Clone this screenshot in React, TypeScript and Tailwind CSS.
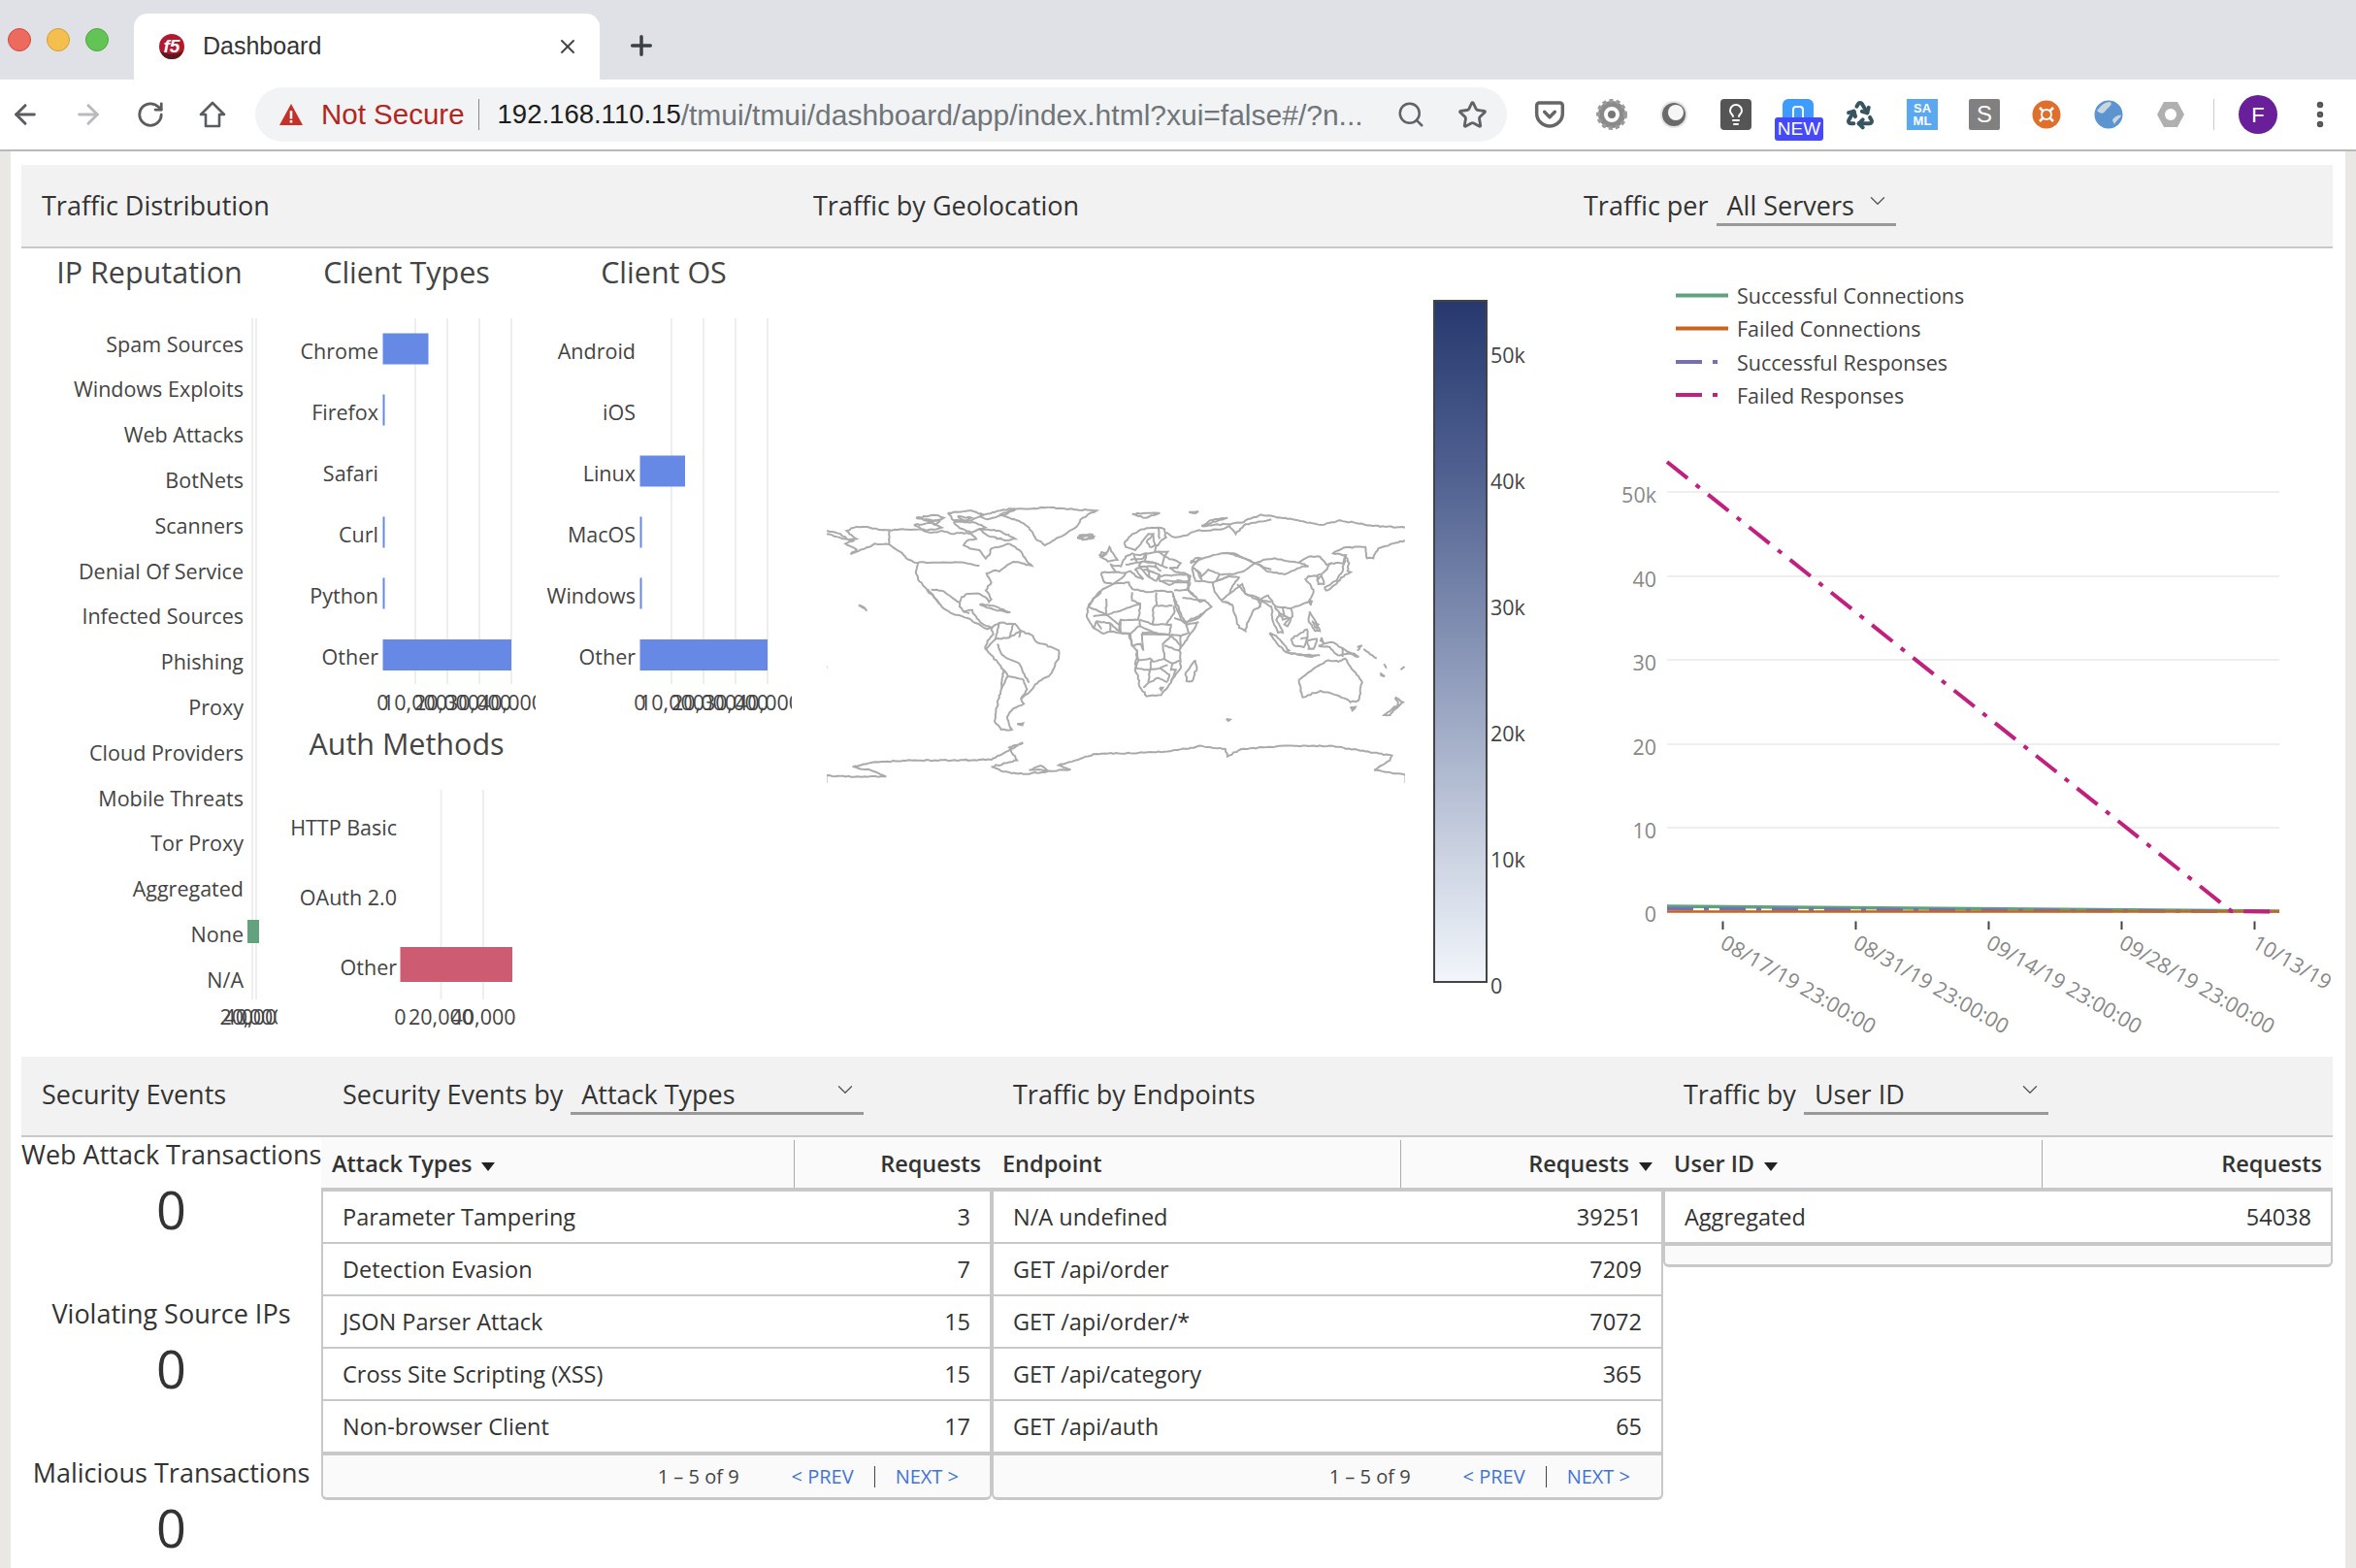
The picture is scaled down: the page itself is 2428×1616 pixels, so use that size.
import { ArrowLeft, ArrowRight, RotateCw, Search, Star, MoreVertical, X, Plus, ChevronDown, Lightbulb, Recycle, Pocket } from 'lucide-react';

type Pt = number[];

// rough coastline: subdivide the traced outline and shake it a little
function rough(pts: Pt, amp = 2) {
  let seed = pts.length * 7 + Math.round(pts[0]);
  const rnd = () => {
    seed = (seed * 9301 + 49297) % 233280;
    return seed / 233280 - 0.5;
  };
  let d = `M${pts[0]} ${pts[1]}`;
  for (let i = 2; i < pts.length; i += 2) {
    const x0 = pts[i - 2];
    const y0 = pts[i - 1];
    const x1 = pts[i];
    const y1 = pts[i + 1];
    const n = Math.max(1, Math.round(Math.hypot(x1 - x0, y1 - y0) / 7));
    for (let k = 1; k <= n; k++) {
      const end = k === n;
      const x = x0 + ((x1 - x0) * k) / n + (end ? 0 : rnd() * amp * 2);
      const y = y0 + ((y1 - y0) * k) / n + (end ? 0 : rnd() * amp * 2);
      d += `L${x.toFixed(1)} ${y.toFixed(1)}`;
    }
  }
  return d;
}

// points traced at 3x from a crop at page position (x0, y0), converted to map units
const crop = (x0: number, y0: number, pts: Pt) =>
  pts.map((v, i) => (i % 2 === 0 ? (x0 + v / 3 - 830) * 2.45 : (y0 + v / 3 - 500) * 3));
const A = (pts: Pt) => crop(1110, 530, pts);
const B = (pts: Pt) => crop(1110, 610, pts);
const C = (pts: Pt) => crop(1260, 560, pts);

const coast: Pt[] = [
  // north america
  [55, 140, 90, 150, 110, 168, 130, 165, 112, 150, 105, 140, 125, 130, 150, 128, 185, 136, 212, 138, 260, 136, 290, 135, 320, 146, 345, 140, 370, 150, 395, 146, 420, 150, 432, 165, 410, 170, 400, 185, 415, 195, 440, 200, 456, 226, 466, 214, 470, 195, 490, 190, 512, 180, 530, 190, 546, 206, 560, 235, 572, 248, 545, 240, 525, 236, 510, 246, 490, 266, 476, 263, 458, 272, 470, 300, 456, 325, 470, 352, 464, 360, 455, 345, 440, 335, 410, 335, 395, 345, 390, 375, 400, 390, 422, 385, 428, 400, 438, 415, 450, 430, 470, 440, 460, 444, 430, 425, 410, 410, 375, 398, 345, 375, 318, 335, 300, 312, 285, 290, 280, 265, 285, 240, 275, 238, 255, 225, 240, 205, 212, 182, 175, 180, 150, 196, 115, 212, 130, 198, 102, 180, 125, 170, 95, 165, 55, 150],
  [310, 320, 325, 345, 340, 368],
  // greenland
  [490, 90, 540, 72, 620, 68, 735, 78, 700, 100, 680, 132, 640, 160, 605, 185, 582, 165, 565, 130, 540, 110, 490, 90],
  // arctic islands
  [280, 100, 330, 92, 350, 100, 320, 112, 280, 100],
  [360, 85, 420, 78, 450, 90, 420, 108, 375, 108, 360, 85],
  [375, 112, 430, 115, 455, 130, 420, 145, 390, 132, 375, 112],
  [275, 122, 320, 116, 345, 130, 305, 140, 275, 122],
  [440, 135, 490, 140, 530, 165, 505, 170, 460, 155, 440, 135],
  [440, 95, 500, 75, 530, 72, 500, 92, 460, 105, 440, 95],
  [300, 105, 340, 110, 330, 120, 300, 105],
  [385, 95, 420, 100, 400, 112, 385, 95],
  [690, 155, 725, 152, 728, 162, 700, 168, 690, 155],
  [825, 88, 865, 85, 895, 85, 860, 100, 825, 88],
  [968, 82, 992, 80, 985, 86, 968, 82],
  // cuba, hawaii and small ones
  [440, 368, 475, 372, 518, 392, 480, 385, 440, 368],
  [135, 370, 150, 378, 156, 388, 146, 378, 135, 370],
  [535, 737, 550, 735, 548, 741, 535, 737],
  [1062, 722, 1072, 724, 1068, 728, 1062, 722],
  // south america
  [470, 440, 490, 425, 530, 428, 545, 450, 575, 465, 582, 482, 640, 510, 640, 530, 625, 570, 615, 590, 590, 605, 565, 640, 545, 660, 552, 675, 525, 690, 510, 715, 515, 740, 522, 755, 495, 755, 478, 730, 482, 690, 495, 630, 500, 570, 475, 530, 455, 505, 460, 480, 475, 460, 470, 440],
  // africa
  A([35, 285, 50, 260, 75, 235, 110, 215, 160, 210, 170, 230, 220, 240, 245, 235, 295, 240]),
  B([75, 0, 50, 20, 35, 45, 30, 75, 50, 110, 80, 128, 105, 122, 160, 128, 170, 165, 185, 180, 180, 235, 195, 295, 215, 322, 260, 318, 290, 280, 320, 235, 318, 175, 345, 135, 375, 92, 340, 100, 325, 90, 305, 45, 296, 0]),
  B([365, 210, 370, 235, 355, 275, 338, 275, 335, 250, 350, 230, 365, 210]),
  // europe
  A([145, 90, 160, 70, 190, 50, 215, 42, 250, 40, 270, 45, 275, 70, 260, 80, 250, 95, 225, 100, 215, 85, 235, 60, 220, 60, 200, 85, 180, 110, 165, 105, 150, 100, 145, 90]),
  A([275, 55, 300, 70, 330, 65, 370, 50, 450, 45, 470, 35, 490, 60, 520, 30, 600, 15]),
  A([385, 35, 410, 18, 465, 10, 420, 22, 400, 35, 385, 35]),
  A([70, 130, 95, 115, 100, 100, 115, 125, 125, 140, 95, 145, 70, 130]),
  A([75, 115, 90, 122, 80, 130, 70, 125, 75, 115]),
  A([75, 180, 120, 178, 150, 180, 140, 195, 110, 215, 85, 210, 75, 180]),
  A([120, 178, 105, 155, 135, 160, 150, 130, 170, 120, 190, 125, 215, 120, 245, 115, 260, 115, 280, 115, 270, 130, 320, 150, 310, 165, 285, 165, 300, 175, 330, 180, 350, 190, 345, 210, 300, 210, 285, 218, 255, 205, 255, 185, 245, 205, 225, 195, 195, 165, 180, 170, 205, 200, 180, 190, 165, 175, 150, 180]),
  A([255, 190, 340, 185, 345, 205, 255, 205]),
  A([0, 70, 30, 65, 50, 68, 30, 76, 0, 72]),
  // middle east
  A([295, 245, 315, 295, 335, 335, 395, 300, 415, 285, 395, 265, 380, 270, 360, 250, 340, 230, 350, 210]),
  A([355, 165, 380, 180, 385, 205, 365, 205, 355, 165]),
  A([350, 150, 365, 135, 380, 135, 355, 165]),
  // asia
  [1000, 125, 1060, 120, 1100, 115, 1150, 90, 1230, 105, 1300, 122, 1350, 108, 1430, 125, 1513, 130],
  [1513, 170, 1482, 180],
  C([525, 0, 480, 15, 465, 45, 445, 45, 440, 10, 375, 12, 340, 30, 380, 35, 375, 60, 335, 60, 310, 90, 290, 100, 265, 100, 255, 110, 270, 125, 280, 150, 265, 180, 240, 190, 210, 200, 215, 225, 200, 255, 190, 250, 205, 230, 185, 235, 175, 215, 165, 235, 185, 275, 170, 275, 155, 240, 150, 195, 120, 175, 115, 195, 95, 205, 75, 245, 70, 270, 50, 260, 30, 190, 5, 180]),
  A([445, 265, 480, 280]),
  C([290, 110, 305, 100, 312, 125, 295, 125, 290, 110]),
  C([375, 35, 390, 60, 385, 85, 395, 88, 365, 105, 350, 125, 320, 145, 315, 135, 350, 115, 370, 85, 375, 35]),
  C([268, 175, 275, 178, 272, 190, 268, 175]),
  C([145, 275, 165, 285, 205, 330, 195, 335, 165, 305, 145, 275]),
  C([195, 335, 230, 342, 275, 350, 300, 345, 240, 345, 195, 335]),
  C([210, 295, 235, 280, 260, 265, 262, 285, 250, 320, 220, 315, 210, 295]),
  C([262, 300, 290, 295, 280, 325, 265, 325, 262, 300]),
  C([268, 210, 280, 230, 300, 270, 285, 270, 265, 240, 268, 210]),
  C([275, 240, 295, 250, 290, 262, 275, 240]),
  C([305, 290, 310, 305, 302, 300, 305, 290]),
  C([295, 315, 340, 305, 370, 325, 420, 350, 385, 340, 355, 345, 330, 320, 295, 315]),
  C([415, 320, 430, 315, 415, 330]),
  C([435, 325, 475, 355]),
  // oceania
  [1245, 600, 1290, 560, 1320, 540, 1345, 545, 1362, 535, 1405, 610, 1395, 665, 1375, 670, 1345, 650, 1300, 635, 1255, 655, 1245, 600],
  [1375, 685, 1388, 685, 1380, 696, 1375, 685],
  [1488, 655, 1508, 670, 1490, 690, 1495, 668, 1488, 655],
  [1490, 682, 1475, 710, 1460, 710, 1490, 682],
  [1450, 585, 1462, 590, 1450, 580],
  [1502, 570, 1512, 560],
  [1460, 552, 1466, 565],
  // antarctica
  [55, 897, 130, 900, 205, 900, 165, 880, 120, 870, 180, 855, 270, 850, 370, 850, 470, 848, 520, 815, 550, 795, 515, 810, 535, 850, 470, 870, 500, 885, 550, 892, 670, 878, 640, 865, 735, 830, 820, 828, 920, 822, 1000, 805, 1060, 815, 1065, 838, 1100, 815, 1200, 805, 1330, 805, 1400, 820, 1480, 835, 1475, 850, 1435, 880, 1513, 895],
  [565, 880, 595, 866, 610, 880, 565, 880],
];

const borders: Pt[] = [
  [212, 138, 212, 182],
  [285, 238, 400, 238, 440, 248],
  [318, 322, 345, 325, 390, 362],
  [400, 390, 415, 395],
  // south america
  [490, 425, 480, 475, 455, 505], [480, 475, 515, 470, 545, 450], [515, 470, 525, 430], [485, 490, 495, 520, 510, 535, 540, 550, 550, 578, 565, 610], [500, 570, 512, 590, 550, 600, 560, 630, 545, 660], [495, 630, 512, 590], [545, 450, 540, 470],
  // africa
  B([90, 20, 90, 70, 140, 55, 195, 35]),
  B([35, 45, 90, 70]),
  B([50, 75, 90, 70, 130, 100, 135, 85, 190, 85, 195, 35, 170, 25, 170, 0]),
  B([195, 85, 195, 105]),
  B([245, 0, 245, 40, 235, 50, 235, 100, 195, 85]),
  B([245, 42, 295, 42]),
  B([235, 100, 275, 100, 300, 65, 300, 42]),
  B([200, 125, 235, 125, 285, 130, 290, 100, 275, 100]),
  B([300, 80, 335, 90, 345, 125, 320, 135, 290, 130]),
  B([320, 135, 320, 165]),
  B([190, 105, 240, 125]),
  B([205, 180, 200, 130, 265, 130, 290, 135, 265, 160, 270, 205, 235, 215, 225, 205, 190, 210]),
  B([290, 135, 320, 165, 318, 175]),
  B([270, 165, 315, 180]),
  B([265, 205, 295, 220, 320, 210]),
  B([185, 180, 190, 210, 180, 235, 225, 240, 230, 210]),
  B([225, 240, 220, 280, 205, 295]),
  B([225, 240, 255, 235, 280, 225]),
  B([255, 235, 285, 255, 280, 275]),
  B([220, 280, 250, 265, 280, 278]),
  B([295, 220, 290, 240, 305, 240, 290, 275]),
  B([50, 110, 60, 90, 100, 95, 130, 120, 130, 95]),
  B([60, 90, 75, 115]),
  B([100, 95, 105, 122]),
  B([135, 85, 135, 125, 165, 128, 190, 105]),
  B([165, 128, 170, 165, 195, 160, 205, 180]),
  B([255, 295, 265, 295, 260, 303, 255, 295]),
  // europe
  A([150, 155, 200, 145, 240, 150, 280, 165]),
  A([175, 125, 185, 150]),
  A([215, 120, 210, 145, 245, 150]),
  A([240, 115, 245, 95]),
  A([250, 115, 270, 130]),
  A([190, 160, 240, 160, 260, 175]),
  A([200, 145, 190, 160]),
  A([245, 150, 240, 165]),
  A([225, 175, 255, 185]),
  A([215, 160, 225, 195]),
  A([235, 60, 240, 95]),
  A([250, 40, 255, 75]),
  A([165, 140, 205, 135, 215, 120]),
  A([270, 130, 262, 160]),
  A([205, 170, 240, 178]),
  // asia
  A([350, 150, 420, 125, 465, 118, 515, 135, 550, 150, 580, 165, 600, 170]),
  A([370, 170, 380, 195, 405, 170, 440, 185, 480, 185, 515, 175, 550, 150]),
  A([385, 205, 420, 210, 425, 240, 445, 265]),
  A([420, 210, 470, 190, 500, 195, 480, 220, 470, 245, 445, 265]),
  A([470, 245, 510, 215, 520, 245, 560, 265, 600, 270]),
  A([440, 185, 430, 205, 470, 190]),
  A([300, 235, 340, 232, 365, 255]),
  A([340, 205, 345, 232]),
  A([325, 258, 395, 265]),
  A([335, 335, 375, 320, 395, 300]),
  C([0, 30, 35, 30, 60, 42, 100, 60, 125, 50, 160, 45, 205, 55, 235, 58, 265, 40, 300, 40, 320, 65, 335, 60]),
  C([110, 62, 135, 85, 190, 95, 245, 70, 265, 70, 235, 58]),
  C([45, 125, 70, 155, 105, 165, 110, 175, 140, 160, 160, 190, 165, 195, 210, 200]),
  C([110, 165, 115, 195]),
  C([160, 195, 175, 215, 205, 230]),
  C([185, 195, 190, 225]),
  C([290, 100, 296, 112]),
  C([370, 320, 370, 350]),
  C([240, 295, 262, 290]),
];

function WorldMap() {
  return (
    <svg viewBox="55 65 1458 855" width="596" height="285" preserveAspectRatio="none" fill="none" stroke="#aaaaaa">
      {coast.map((p, i) => (
        <path key={i} d={rough(p)} strokeWidth="2" vectorEffect="non-scaling-stroke" />
      ))}
      {borders.map((p, i) => (
        <path key={i} d={rough(p, 1.4)} strokeWidth="2" vectorEffect="non-scaling-stroke" />
      ))}
      <path d="M55 895V920M1513 895V920M55 558V565" strokeWidth="1" vectorEffect="non-scaling-stroke" />
    </svg>
  );
}

type BarChartProps = {
  box: [number, number, number, number];
  title?: { text: string; x: number; y: number };
  labels: { text: string; y: number }[];
  labelX: number;
  grid: number[];
  gridTop: number;
  gridBottom: number;
  bars: { x: number; y: number; w: number; h: number; fill: string }[];
  ticks: { text: string; x: number }[];
  tickY: number;
};

function BarChart({ box, title, labels, labelX, grid, gridTop, gridBottom, bars, ticks, tickY }: BarChartProps) {
  return (
    <svg viewBox={box.join(' ')} width={box[2]} height={box[3]} className="shrink-0">
      {title && (
        <text x={title.x} y={title.y} fontSize="30.5" textAnchor="middle" dominantBaseline="central" fill="#444444">
          {title.text}
        </text>
      )}
      {grid.map((x) => (
        <line key={x} x1={x} x2={x} y1={gridTop} y2={gridBottom} stroke="#eeeeee" strokeWidth="2" />
      ))}
      {bars.map((b, i) => (
        <rect key={i} x={b.x} y={b.y} width={b.w} height={b.h} fill={b.fill} />
      ))}
      {labels.map((l) => (
        <text key={l.text} x={labelX} y={l.y} fontSize="21.5" textAnchor="end" dominantBaseline="central" fill="#444444">
          {l.text}
        </text>
      ))}
      {ticks.map((t) => (
        <text key={t.text} x={t.x} y={tickY} fontSize="21.5" textAnchor="middle" dominantBaseline="central" fill="#444444">
          {t.text}
        </text>
      ))}
    </svg>
  );
}

const ipLabels = ['Spam Sources', 'Windows Exploits', 'Web Attacks', 'BotNets', 'Scanners', 'Denial Of Service', 'Infected Sources', 'Phishing', 'Proxy', 'Cloud Providers', 'Mobile Threats', 'Tor Proxy', 'Aggregated', 'None', 'N/A'];
const clientYs = [361.5, 424.5, 487.5, 550.5, 613.5, 676.5];
const blue = '#6689e6';

function Select({ value, width }: { value: string; width: string }) {
  return (
    <div className={`relative h-[42px] border-b-[3px] border-[#999999] pl-[11px] leading-[42px] ${width}`}>
      {value}
      <ChevronDown className="absolute right-[6px] top-[3px] h-[26px] w-[26px] text-[#555555]" strokeWidth={1.2} />
    </div>
  );
}

function Caret() {
  return <span className="ml-[10px] inline-block h-0 w-0 translate-y-[3px] border-x-[7px] border-t-[9px] border-x-transparent border-t-[#222222]" />;
}

type TableProps = {
  columns: [string, string];
  sortFirst?: boolean;
  split: string;
  rows: [string, string][];
  paged?: boolean;
};

function DataTable({ columns, sortFirst, split, rows, paged }: TableProps) {
  return (
    <div className="w-full">
      <div className="flex h-[52px] items-center bg-[#fafafa] pt-[3px] text-[23.5px] font-semibold text-[#333333]">
        <div className={`flex h-full items-center border-r border-[#aaaaaa] pl-[11px] ${split}`}>
          {columns[0]}
          {sortFirst && <Caret />}
        </div>
        <div className="flex h-full flex-1 items-center justify-end pr-[11px]">
          {columns[1]}
          {!sortFirst && columns[0] === 'Endpoint' && <Caret />}
        </div>
      </div>
      <div className="border-y-[4px] border-x-2 border-[#c8c8c8]">
        {rows.map(([name, value], i) => (
          <div key={name} className={`box-content flex h-[50px] items-center justify-between px-[20px] pt-[2px] text-[23.5px] leading-none text-[#333333] ${i > 0 ? 'border-t-2 border-[#c8c8c8]' : ''}`}>
            <span>{name}</span>
            <span>{value}</span>
          </div>
        ))}
      </div>
      {paged ? (
        <div className="flex h-[46px] items-center justify-end rounded-b-md border-x-2 border-b-[3px] border-[#c8c8c8] bg-[#fafafa] pr-[32px] text-[20px] text-[#444444]">
          <span>1 – 5 of 9</span>
          <span className="ml-[54px] text-[#3f74d6]">&lt; PREV</span>
          <span className="mx-[21px] h-[22px] w-px bg-[#444444]" />
          <span className="text-[#3f74d6]">NEXT &gt;</span>
        </div>
      ) : (
        <div className="h-[22px] rounded-b-md border-x-2 border-b-[3px] border-[#c8c8c8] bg-[#fafafa]" />
      )}
    </div>
  );
}

function Stat({ label }: { label: string }) {
  return (
    <div className="h-[164px] text-center">
      <div className="h-[36px] whitespace-nowrap text-[27px] leading-[36px] text-[#333333]">{label}</div>
      <div className="h-[76px] text-[54px] leading-[76px] text-[#333333]">0</div>
    </div>
  );
}

function TrafficLights() {
  return (
    <div className="flex gap-[16px] pb-[29px] pl-[8px]">
      <span className="h-[24px] w-[24px] rounded-full border border-[#d0483f] bg-[#ec6a5e]" />
      <span className="h-[24px] w-[24px] rounded-full border border-[#d59f2c] bg-[#f4bf4f]" />
      <span className="h-[24px] w-[24px] rounded-full border border-[#53a63a] bg-[#61c454]" />
    </div>
  );
}

function Extensions() {
  const box = 'flex h-[32px] w-[32px] items-center justify-center';
  return (
    <div className="ml-[28px] flex items-center gap-[32px]">
      <span className={box}>
        <Pocket className="h-[32px] w-[32px] text-[#666666]" strokeWidth={2.6} />
      </span>
      <span className={box}>
        <svg viewBox="0 0 32 32" width="32" height="32">
          <circle cx="16" cy="16" r="11" fill="none" stroke="#8a8a8a" strokeWidth="6" />
          <circle cx="16" cy="16" r="14" fill="none" stroke="#9a9a9a" strokeWidth="4" strokeDasharray="4 3" />
          <circle cx="16" cy="16" r="4" fill="#777777" />
        </svg>
      </span>
      <span className={box}>
        <svg viewBox="0 0 32 32" width="32" height="32">
          <circle cx="16" cy="16" r="14" fill="#e4e4e4" />
          <circle cx="16" cy="16" r="12" fill="#6a6a6a" />
          <ellipse cx="18" cy="14" rx="8" ry="8" fill="#f6f6f6" />
        </svg>
      </span>
      <span className="flex h-[32px] w-[32px] items-center justify-center rounded-sm bg-[#555555]">
        <Lightbulb className="h-[24px] w-[24px] text-white" strokeWidth={2} />
      </span>
      <span className="relative h-[32px] w-[32px]">
        <span className="block h-[20px] w-[32px] rounded-t-md bg-[#3e9bff] pl-[10px] pt-[7px]">
          <span className="block h-[13px] w-[12px] rounded-t-sm border-2 border-b-0 border-white" />
        </span>
        <span className="absolute left-[-8px] top-[19px] flex h-[24px] w-[50px] items-center justify-center rounded-[3px] bg-[#4449ff] text-[19px] text-white">NEW</span>
      </span>
      <span className={box}>
        <Recycle className="h-[32px] w-[32px] text-[#37545f]" strokeWidth={3} />
      </span>
      <span className="flex h-[32px] w-[32px] flex-col items-center justify-center bg-[#5aa9f0] text-[13px] font-bold leading-[13px] text-white">
        <span>SA</span>
        <span>ML</span>
      </span>
      <span className="flex h-[32px] w-[32px] items-center justify-center rounded-[2px] bg-[#808080] text-[24px] text-white">S</span>
      <span className={box}>
        <svg viewBox="0 0 32 32" width="32" height="32">
          <circle cx="16" cy="16" r="14.5" fill="#de6f2d" />
          <circle cx="16" cy="16" r="5" fill="none" stroke="#fff" strokeWidth="2" />
          <path d="M9 9l4 4M23 9l-4 4M9 23l4-4M23 23l-4-4" stroke="#fff" strokeWidth="2.5" />
        </svg>
      </span>
      <span className={box}>
        <svg viewBox="0 0 32 32" width="32" height="32">
          <circle cx="16" cy="16" r="14.5" fill="#5b94cf" />
          <path d="M4 12c5-6 8-9 14-9 3 3-3 6-5 9s-5 4-9 0zM22 26c3-5 6-6 7-9-3-1-8 2-9 5z" fill="#c9d6dd" />
        </svg>
      </span>
      <span className={box}>
        <svg viewBox="0 0 32 32" width="32" height="32">
          <path d="M9 3h14l7 13-7 13H9L2 16z" fill="#b0b0b0" />
          <circle cx="16" cy="16" r="6" fill="#ffffff" />
        </svg>
      </span>
    </div>
  );
}

function BrowserChrome() {
  return (
    <div className="font-['Liberation_Sans',sans-serif]">
      <div className="flex h-[82px] items-end bg-[#dfe1e6]">
        <TrafficLights />
        <div className="ml-[26px] flex h-[68px] w-[480px] items-center rounded-t-[14px] bg-white pl-[25px] pr-[21px]">
          <svg viewBox="0 0 28 28" width="28" height="28" className="shrink-0">
            <circle cx="14" cy="14" r="13" fill="#b4182f" />
            <path d="M2 18c6 5 18 5 24 0-2 6-6 9-12 9S4 24 2 18z" fill="#5a1a20" />
            <text x="14" y="20" fontSize="19" fontWeight="700" fontStyle="italic" textAnchor="middle" fill="#ffffff">f5</text>
          </svg>
          <span className="ml-[18px] text-[25px] text-[#333333]">Dashboard</span>
          <X className="ml-auto h-[24px] w-[24px] text-[#444444]" strokeWidth={2} />
        </div>
        <Plus className="mb-[19px] ml-[27px] h-[32px] w-[32px] text-[#3c4043]" strokeWidth={2.6} />
      </div>
      <div className="flex h-[74px] items-center border-b-2 border-[#b9b9b9] bg-white">
        <div className="flex items-center gap-[33px] pl-[10px]">
          <ArrowLeft className="h-[32px] w-[32px] text-[#5a5c60]" strokeWidth={2.2} />
          <ArrowRight className="h-[32px] w-[32px] text-[#b8babd]" strokeWidth={2.2} />
          <RotateCw className="h-[30px] w-[30px] text-[#5a5c60]" strokeWidth={2.2} />
          <svg viewBox="0 0 32 32" width="32" height="32" fill="none" stroke="#5a5c60" strokeWidth="2.6" strokeLinejoin="round">
            <path d="M16 4 4 16h5v12h14V16h5z" />
          </svg>
        </div>
        <div className="ml-[28px] flex h-[56px] w-[1290px] items-center rounded-full bg-[#f1f3f4] pl-[24px] pr-[20px] text-[30px]">
          <svg viewBox="0 0 28 26" width="26" height="24" className="shrink-0">
            <path d="M14 1 27 25H1z" fill="#c5302a" />
            <path d="M12.6 9h2.8v9h-2.8zM12.6 19.500h2.800v2.700h-2.800z" fill="#fff" />
          </svg>
          <span className="ml-[18px] whitespace-nowrap text-[29.5px] text-[#b3261e]">Not Secure</span>
          <span className="ml-[14px] h-[32px] w-px bg-[#888888]" />
          <span className="ml-[19px] whitespace-nowrap text-[27.5px] text-[#1c1c1c]">192.168.110.15</span>
          <span className="whitespace-nowrap text-[#70757a]">/tmui/tmui/dashboard/app/index.html?xui=false#/?n...</span>
          <Search className="ml-auto h-[30px] w-[30px] shrink-0 text-[#5f6368]" strokeWidth={2} />
          <Star className="ml-[33px] h-[31px] w-[31px] shrink-0 text-[#5f6368]" strokeWidth={2.2} />
        </div>
        <Extensions />
        <span className="ml-[28px] h-[32px] w-px bg-[#cccccc]" />
        <span className="ml-[25px] flex h-[40px] w-[40px] items-center justify-center rounded-full bg-[#6a1f9a] text-[22px] text-white">F</span>
        <MoreVertical className="ml-[27px] h-[34px] w-[34px] text-[#555555]" strokeWidth={2.6} />
      </div>
    </div>
  );
}

function ColorBar() {
  const ticks = [
    ['50k', 365],
    ['40k', 495],
    ['30k', 625],
    ['20k', 755],
    ['10k', 885],
    ['0', 1015],
  ] as const;
  return (
    <svg viewBox="1470 300 110 730" width="110" height="730" className="shrink-0">
      <defs>
        <linearGradient id="scale" x1="0" x2="0" y1="0" y2="1">
          <stop offset="0" stopColor="#26386e" />
          <stop offset="0.25" stopColor="#4f6090" />
          <stop offset="0.55" stopColor="#8f9cbb" />
          <stop offset="0.8" stopColor="#c8d0e0" />
          <stop offset="1" stopColor="#f2f6fb" />
        </linearGradient>
      </defs>
      <rect x="1478" y="310" width="54" height="702" fill="url(#scale)" stroke="#444444" strokeWidth="2" />
      {ticks.map(([t, y]) => (
        <text key={t} x="1536" y={y} fontSize="21.5" dominantBaseline="central" fill="#444444">
          {t}
        </text>
      ))}
    </svg>
  );
}

function LineChart() {
  const legend = [
    ['Successful Connections', 304.5, '#5fa37d', undefined],
    ['Failed Connections', 338.5, '#c8641e', undefined],
    ['Successful Responses', 373, '#7570b3', '27 11 5 11'],
    ['Failed Responses', 407, '#c2207f', '27 11 5 11'],
  ] as const;
  const rows = [
    ['50k', 507],
    ['40', 594],
    ['30', 680],
    ['20', 767],
    ['10', 853],
    ['0', 939.5],
  ] as const;
  const dates = [
    ['08/17/19 23:00:00', 1775.5],
    ['08/31/19 23:00:00', 1912.5],
    ['09/14/19 23:00:00', 2049.5],
    ['09/28/19 23:00:00', 2186.5],
    ['10/13/19 23:00:00', 2323.5],
  ] as const;
  return (
    <svg viewBox="1610 256 794 833" width="794" height="833" className="shrink-0">
      <defs>
        <clipPath id="dates">
          <rect x="1610" y="940" width="792" height="149" />
        </clipPath>
      </defs>
      {legend.map(([text, y, color, dash]) => (
        <g key={text}>
          <line x1="1727" x2="1781" y1={y} y2={y} stroke={color} strokeWidth="4" strokeDasharray={dash} />
          <text x="1790" y={y} fontSize="21.5" dominantBaseline="central" fill="#444444">
            {text}
          </text>
        </g>
      ))}
      {rows.map(([t, y]) => (
        <g key={t}>
          <line x1="1718" x2="2349" y1={y} y2={y} stroke="#eeeeee" strokeWidth="2" />
          <text x="1707" y={y + 2} fontSize="21.5" textAnchor="end" dominantBaseline="central" fill="#888888">
            {t}
          </text>
        </g>
      ))}
      <line x1="1718" x2="2349" y1="934" y2="939" stroke="#5fa37d" strokeWidth="3.500" />
      <line x1="1718" x2="2349" y1="936.500" y2="939.500" stroke="#7570b3" strokeWidth="3.500" strokeDasharray="27 11 5 11" />
      <line x1="1718" x2="2349" y1="939.500" y2="939.500" stroke="#c8641e" strokeWidth="2.500" />
      <path d="M1718 476 2299.500 939 2349 939.500" fill="none" stroke="#c2207f" strokeWidth="4" strokeDasharray="27 11 5 11" />
      {dates.map(([d, x]) => (
        <g key={d} clipPath="url(#dates)">
          <line x1={x} x2={x} y1="949.500" y2="958" stroke="#444444" strokeWidth="2" />
          <text x={x - 4} y="976" fontSize="21.5" transform={`rotate(30 ${x - 4} 976)`} fill="#888888">
            {d}
          </text>
        </g>
      ))}
    </svg>
  );
}

export default function App() {
  return (
    <div className="h-[1616px] w-[2428px] overflow-hidden bg-white font-['Open_Sans',sans-serif] text-[#333333]">
      <BrowserChrome />
      <div className="flex h-[1460px]">
        <div className="w-[11px] shrink-0 bg-[#e9e8e5]" />
        <div className="ml-[11px] w-[2382px] shrink-0 pt-[14px]">
          <div className="grid h-[86px] grid-cols-3 items-center border-b-2 border-[#c8c8c8] bg-[#f2f2f2] text-[27px]">
            <div className="pl-[21px]">Traffic Distribution</div>
            <div className="pl-[22px]">Traffic by Geolocation</div>
            <div className="flex items-center pl-[22px]">
              Traffic per
              <div className="ml-[8px]">
                <Select value="All Servers" width="w-[185px]" />
              </div>
            </div>
          </div>

          <div className="flex h-[833px]">
            {/* traffic distribution charts */}
            <div className="flex w-[794px] shrink-0">
              <BarChart
                box={[22, 256, 264, 833]}
                title={{ text: 'IP Reputation', x: 154, y: 280 }}
                labels={ipLabels.map((text, i) => ({ text, y: 354 + i * 46.8 }))}
                labelX={251}
                grid={[260, 264]}
                gridTop={328}
                gridBottom={1030}
                bars={[{ x: 255, y: 948, w: 12, h: 24, fill: '#63a27e' }]}
                ticks={[
                  { text: '0', x: 255 },
                  { text: '20,000', x: 260 },
                  { text: '40,000', x: 264 },
                ]}
                tickY={1047}
              />
              <div className="w-[530px] shrink-0">
                <div className="flex h-[479px] gap-[6px]">
                  <BarChart
                    box={[286, 256, 266, 479]}
                    title={{ text: 'Client Types', x: 419, y: 280 }}
                    labels={['Chrome', 'Firefox', 'Safari', 'Curl', 'Python', 'Other'].map((text, i) => ({ text, y: clientYs[i] }))}
                    labelX={390}
                    grid={[428, 461, 494, 527]}
                    gridTop={328}
                    gridBottom={705}
                    bars={[
                      { x: 394.5, y: 343.5, w: 47, h: 32, fill: blue },
                      { x: 394.5, y: 406.5, w: 2, h: 32, fill: blue },
                      { x: 394.5, y: 532.5, w: 2, h: 32, fill: blue },
                      { x: 394.5, y: 595.5, w: 2, h: 32, fill: blue },
                      { x: 394.5, y: 659, w: 132.5, h: 32, fill: blue },
                    ]}
                    ticks={['0', '10,000', '20,000', '30,000', '40,000'].map((text, i) => ({ text, x: 394.5 + i * 33 }))}
                    tickY={723}
                  />
                  <BarChart
                    box={[558, 256, 258, 479]}
                    title={{ text: 'Client OS', x: 684, y: 280 }}
                    labels={['Android', 'iOS', 'Linux', 'MacOS', 'Windows', 'Other'].map((text, i) => ({ text, y: clientYs[i] }))}
                    labelX={655}
                    grid={[692, 725, 758, 791]}
                    gridTop={328}
                    gridBottom={705}
                    bars={[
                      { x: 659.5, y: 469.5, w: 46.5, h: 32, fill: blue },
                      { x: 659.5, y: 532.5, w: 2, h: 32, fill: blue },
                      { x: 659.5, y: 595.5, w: 2, h: 32, fill: blue },
                      { x: 659.5, y: 659, w: 131.5, h: 32, fill: blue },
                    ]}
                    ticks={['0', '10,000', '20,000', '30,000', '40,000'].map((text, i) => ({ text, x: 659.5 + i * 33 }))}
                    tickY={723}
                  />
                </div>
                <BarChart
                  box={[286, 735, 530, 354]}
                  title={{ text: 'Auth Methods', x: 419, y: 766 }}
                  labels={[
                    { text: 'HTTP Basic', y: 852 },
                    { text: 'OAuth 2.0', y: 924 },
                    { text: 'Other', y: 996 },
                  ]}
                  labelX={409}
                  grid={[454.5, 498]}
                  gridTop={814}
                  gridBottom={1030}
                  bars={[{ x: 412.5, y: 976, w: 115.5, h: 36, fill: '#cd5c72' }]}
                  ticks={[
                    { text: '0', x: 412.5 },
                    { text: '20,000', x: 454.5 },
                    { text: '40,000', x: 498 },
                  ]}
                  tickY={1047}
                />
              </div>
            </div>

            {/* geolocation */}
            <div className="flex w-[794px] shrink-0 items-start pl-[36px]">
              <div className="mt-[266px]">
                <WorldMap />
              </div>
              <div className="ml-[22px] mt-[44px]">
                <ColorBar />
              </div>
            </div>

            <LineChart />
          </div>

          <div className="grid h-[83px] grid-cols-[309px_691px_692px_690px] items-center border-b-2 border-[#c8c8c8] bg-[#f2f2f2] pb-[3px] text-[27px]">
            <div className="pl-[21px]">Security Events</div>
            <div className="flex items-center pl-[22px]">
              Security Events by
              <div className="ml-[8px]">
                <Select value="Attack Types" width="w-[302px]" />
              </div>
            </div>
            <div className="pl-[22px]">Traffic by Endpoints</div>
            <div className="flex items-center pl-[21px]">
              Traffic by
              <div className="ml-[8px]">
                <Select value="User ID" width="w-[252px]" />
              </div>
            </div>
          </div>

          <div className="grid grid-cols-[309px_691px_692px_690px] items-start">
            <div>
              <Stat label="Web Attack Transactions" />
              <Stat label="Violating Source IPs" />
              <Stat label="Malicious Transactions" />
            </div>
            <DataTable
              columns={['Attack Types', 'Requests']}
              sortFirst
              split="w-[488px]"
              paged
              rows={[
                ['Parameter Tampering', '3'],
                ['Detection Evasion', '7'],
                ['JSON Parser Attack', '15'],
                ['Cross Site Scripting (XSS)', '15'],
                ['Non-browser Client', '17'],
              ]}
            />
            <DataTable
              columns={['Endpoint', 'Requests']}
              split="w-[422px]"
              paged
              rows={[
                ['N/A undefined', '39251'],
                ['GET /api/order', '7209'],
                ['GET /api/order/*', '7072'],
                ['GET /api/category', '365'],
                ['GET /api/auth', '65'],
              ]}
            />
            <DataTable
              columns={['User ID', 'Requests']}
              sortFirst
              split="w-[391px]"
              rows={[['Aggregated', '54038']]}
            />
          </div>
        </div>
        <div className="ml-auto w-[11px] shrink-0 bg-[#e9e8e5]" />
      </div>
    </div>
  );
}
